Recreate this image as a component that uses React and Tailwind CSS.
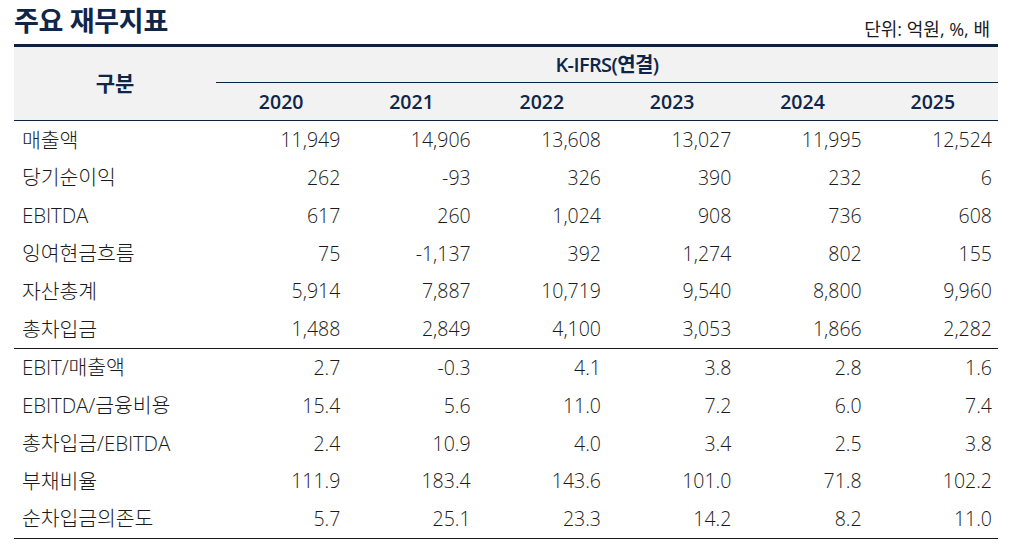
const years = ["2020", "2021", "2022", "2023", "2024", "2025"];

const groupA = [
  ["매출액", ["11,949", "14,906", "13,608", "13,027", "11,995", "12,524"]],
  ["당기순이익", ["262", "-93", "326", "390", "232", "6"]],
  ["EBITDA", ["617", "260", "1,024", "908", "736", "608"]],
  ["잉여현금흐름", ["75", "-1,137", "392", "1,274", "802", "155"]],
  ["자산총계", ["5,914", "7,887", "10,719", "9,540", "8,800", "9,960"]],
  ["총차입금", ["1,488", "2,849", "4,100", "3,053", "1,866", "2,282"]],
];

const groupB = [
  ["EBIT/매출액", ["2.7", "-0.3", "4.1", "3.8", "2.8", "1.6"]],
  ["EBITDA/금융비용", ["15.4", "5.6", "11.0", "7.2", "6.0", "7.4"]],
  ["총차입금/EBITDA", ["2.4", "10.9", "4.0", "3.4", "2.5", "3.8"]],
  ["부채비율", ["111.9", "183.4", "143.6", "101.0", "71.8", "102.2"]],
  ["순차입금의존도", ["5.7", "25.1", "23.3", "14.2", "8.2", "11.0"]],
];

const font = { fontFamily: '"Open Sans", "Noto Sans CJK KR", sans-serif' };

const Row = ({ label, values }) => (
  <div className="grid grid-cols-[202px_repeat(6,1fr)] h-[37.8px] items-center text-[19.5px] text-[#1a1a1a] font-light">
    <div className="pl-[8px] text-[20.5px] tracking-[-0.1px]">{label}</div>
    {values.map((v, i) => (
      <div key={i} className="text-right pr-[6px]">
        {v}
      </div>
    ))}
  </div>
);

export default function App() {
  return (
    <div className="w-[1012px] h-[546px] bg-white px-[14px]" style={font}>
      {/* Title */}
      <div className="flex items-end justify-between h-[44px]">
        <div className="text-[27px] font-bold text-[#0f2648] leading-[30px] pb-[8px] tracking-[-0.3px]">
          주요 재무지표
        </div>
        <div className="text-[18px] text-[#1a1a1a] leading-[22px] pb-[4px] pr-[8px]">
          단위: 억원, %, 배
        </div>
      </div>
      <div className="h-[3px] bg-[#0c2340]" />

      {/* Header */}
      <div className="grid grid-cols-[202px_1fr] bg-[#f2f2f2] border-b border-[#0c2340] text-[#0f2648] font-semibold">
        <div className="flex items-center justify-center text-[21px]">구분</div>
        <div className="flex flex-col">
          <div className="h-[36px] flex items-center justify-center border-b border-[#0c2340] text-[20px] tracking-[-0.6px]">
            K-IFRS(연결)
          </div>
          <div className="h-[37px] grid grid-cols-6 items-center text-[19.5px]">
            {years.map((y) => (
              <div key={y} className="text-center">
                {y}
              </div>
            ))}
          </div>
        </div>
      </div>

      {/* Body */}
      <div className="border-b border-[#1a1a1a]">
        {groupA.map(([l, v]) => (
          <Row key={l} label={l} values={v} />
        ))}
      </div>
      <div className="border-b border-[#1a1a1a]">
        {groupB.map(([l, v]) => (
          <Row key={l} label={l} values={v} />
        ))}
      </div>
    </div>
  );
}
